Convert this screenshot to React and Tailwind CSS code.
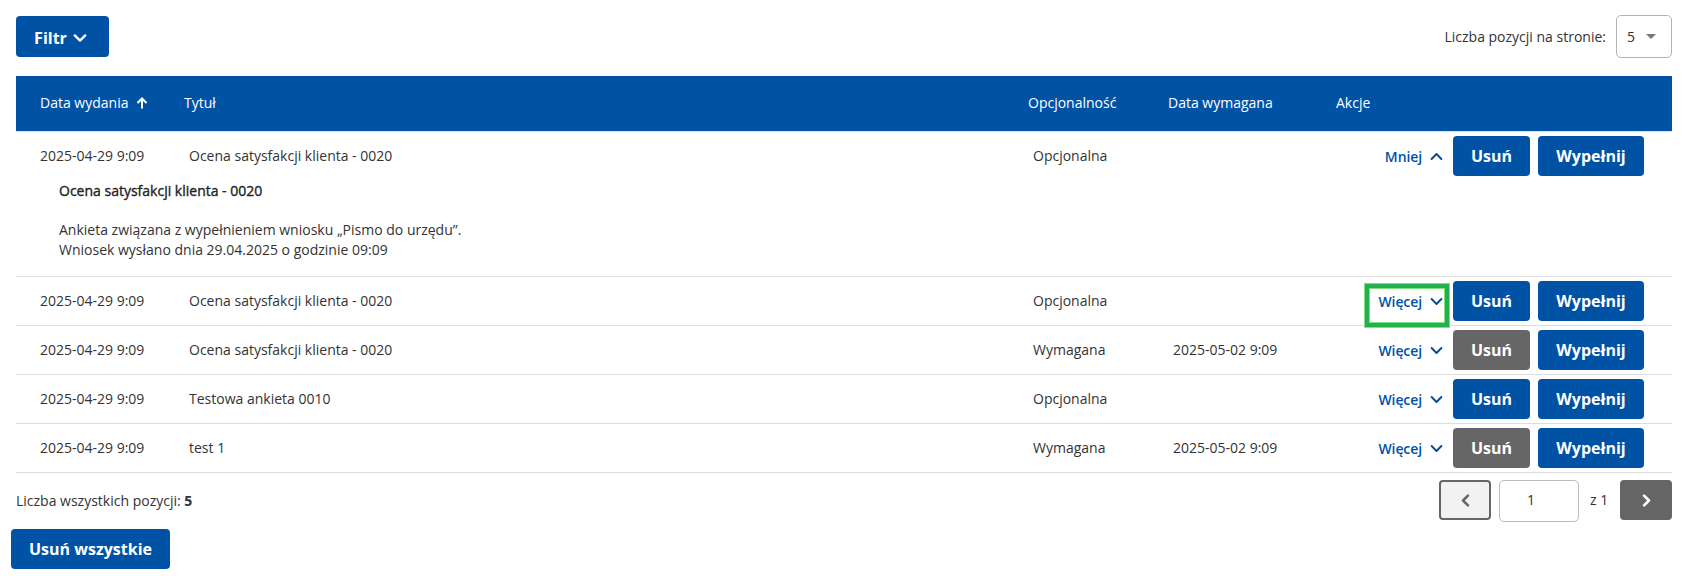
import React from "react";

function Chevron({ dir = "down", className = "", sw = 2.5 }) {
  const d = {
    down: "M2 5 L8 11 L14 5",
    up: "M2 11 L8 5 L14 11",
    left: "M11 2 L5 8 L11 14",
    right: "M5 2 L11 8 L5 14",
  }[dir];
  return (
    <svg viewBox="0 0 16 16" fill="none" stroke="currentColor" strokeWidth={sw} strokeLinecap="round" strokeLinejoin="round" className={className}>
      <path d={d} />
    </svg>
  );
}

const rows = [
  { t: "Ocena satysfakcji klienta - 0020", o: "Opcjonalna", d: "", gray: false, focus: true },
  { t: "Ocena satysfakcji klienta - 0020", o: "Wymagana", d: "2025-05-02 9:09", gray: true },
  { t: "Testowa ankieta 0010", o: "Opcjonalna", d: "", gray: false },
  { t: "test 1", o: "Wymagana", d: "2025-05-02 9:09", gray: true },
];

function Btn({ children, gray, className = "" }) {
  return (
    <button className={`rounded-[4px] text-[16px] font-bold text-white flex items-center justify-center ${gray ? "bg-[#666666]" : "bg-[#0052a5]"} ${className}`}>
      {children}
    </button>
  );
}

function Actions({ label, up, gray, focus }) {
  return (
    <div className="flex items-center justify-end flex-1 pr-[28px]">
      <div className={`flex items-center justify-end w-[76px] h-[35px] mt-[9px] pb-[9px] pr-[2px] text-[14px] font-semibold tracking-[-0.1px] text-[#0052a5] ${focus ? "outline-[4px] outline-[#22b14c] shadow-[0_0_0_5px_#7ee07e,inset_0_0_0_1px_#7ee07e]" : ""}`}>
        <span>{label}</span>
        <Chevron dir={up ? "up" : "down"} className="ml-[8px] w-[13px] h-[13px] text-[#0a4a94]" sw={2.4} />
      </div>
      <Btn gray={gray} className="h-10 w-[77px] ml-[8px]">Usuń</Btn>
      <Btn className="h-10 w-[106px] ml-[8px]">Wypełnij</Btn>
    </div>
  );
}

function Row({ t, o, d, gray, focus }) {
  return (
    <div className="flex items-center h-[49px] border-b border-[#dddddd] text-[14px] text-[#333333]">
      <div className="w-[173px] pl-[24px] pb-[2px] shrink-0">2025-04-29 9:09</div>
      <div className="w-[844px] pb-[2px] shrink-0">{t}</div>
      <div className="w-[140px] pb-[2px] shrink-0">{o}</div>
      <div className="w-[140px] pb-[2px] shrink-0">{d}</div>
      <Actions label="Więcej" gray={gray} focus={focus} />
    </div>
  );
}

export default function App() {
  return (
    <div className="w-[1697px] h-[576px] bg-white font-['Open_Sans',sans-serif] text-[#333333] overflow-hidden">
      <div className="pl-4 pt-4 w-[1672px]">
        <div className="flex items-center justify-between h-[41px]">
          <Btn className="h-[41px] w-[93px] pr-[4px] pt-[2px]">
            Filtr
            <Chevron className="ml-[6px] w-[14px] h-[14px]" sw={2.6} />
          </Btn>
          <div className="flex items-center text-[14px]">
            <span>Liczba pozycji na stronie:</span>
            <div className="ml-[10px] w-[56px] h-[43px] border border-[#b3b3b3] rounded-[5px] flex items-center justify-between pl-[10px] pr-[15px]">
              <span>5</span>
              <span className="w-0 h-0 border-x-[5px] border-x-transparent border-t-[5px] border-t-[#777777]"></span>
            </div>
          </div>
        </div>

        <div className="mt-[19px] flex items-center h-[55px] pb-[2px] bg-[#0052a5] text-white text-[14px]">
          <div className="w-[168px] pl-[24px] shrink-0 flex items-center">
            Data wydania
            <svg viewBox="0 0 12 12" fill="none" stroke="currentColor" strokeWidth="2" className="ml-[8px] w-[12px] h-[12px]">
              <path d="M6 11.5 V1.5 M1.5 6 L6 1.5 L10.5 6" />
            </svg>
          </div>
          <div className="w-[844px] shrink-0">Tytuł</div>
          <div className="w-[140px] shrink-0">Opcjonalność</div>
          <div className="w-[168px] shrink-0">Data wymagana</div>
          <div className="flex-1">Akcje</div>
        </div>

        <div className="border-t border-[#dde5ee] border-b-[#dddddd] border-b h-[146px] text-[14px]">
          <div className="flex items-center h-[48px]">
            <div className="w-[173px] pl-[24px] pb-[2px] shrink-0">2025-04-29 9:09</div>
            <div className="w-[844px] pb-[2px] shrink-0">Ocena satysfakcji klienta - 0020</div>
            <div className="w-[140px] pb-[2px] shrink-0">Opcjonalna</div>
            <div className="w-[140px] shrink-0"></div>
            <Actions label="Mniej" up />
          </div>
          <div className="pl-[43px] pt-[1px]">
            <div className="leading-[20px] text-[#222222] [-webkit-text-stroke:0.35px_#222222]">Ocena satysfakcji klienta - 0020</div>
            <div className="mt-[19px] leading-[20px]">Ankieta związana z wypełnieniem wniosku „Pismo do urzędu”.</div>
            <div className="leading-[20px]">Wniosek wysłano dnia 29.04.2025 o godzinie 09:09</div>
          </div>
        </div>

        {rows.map((r, i) => <Row key={i} {...r} />)}

        <div className="flex items-start justify-between mt-[7px] h-[42px] text-[14px]">
          <div className="mt-[10px]">Liczba wszystkich pozycji: <span className="font-bold">5</span></div>
          <div className="flex items-start">
            <button className="w-[52px] h-10 rounded-[4px] border-2 border-[#666666] bg-[#f2f2f2] flex items-center justify-center text-[#666666]">
              <Chevron dir="left" className="w-[13px] h-[13px]" sw={3.2} />
            </button>
            <div className="ml-[8px] w-[80px] h-[42px] border border-[#bbbbbb] rounded-[5px] flex items-center pl-[27px] pb-[4px]">1</div>
            <span className="ml-[11px] w-[30px] leading-[40px]">z 1</span>
            <button className="w-[52px] h-10 rounded-[4px] bg-[#666666] flex items-center justify-center text-white">
              <Chevron dir="right" className="w-[13px] h-[13px]" sw={3.2} />
            </button>
          </div>
        </div>
      </div>
      <div className="pl-[11px] mt-[7px]">
        <Btn className="h-10 w-[159px]">Usuń wszystkie</Btn>
      </div>
    </div>
  );
}
